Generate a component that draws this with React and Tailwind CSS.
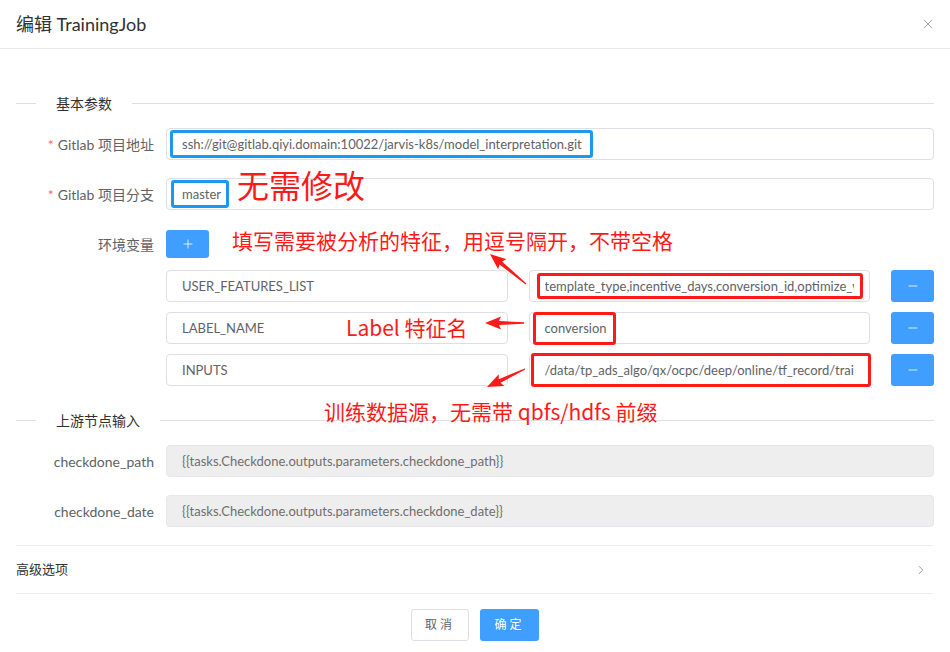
import React from 'react';
import { X, Plus, Minus, ChevronRight } from 'lucide-react';

const RED = '#ff1a1a';

function Arrow({ x1, y1, x2, y2 }) {
  const dx = x2 - x1, dy = y2 - y1, L = Math.hypot(dx, dy);
  const ux = dx / L, uy = dy / L, nx = -uy, ny = ux;
  const bx = x2 - ux * 14, by = y2 - uy * 14;
  const p = (x, y, k) => `${(x + nx * k).toFixed(1)},${(y + ny * k).toFixed(1)}`;
  const pts = [p(x1, y1, 0.7), p(bx, by, 2), p(bx - ux * 2, by - uy * 2, 6.5), `${x2},${y2}`, p(bx - ux * 2, by - uy * 2, -6.5), p(bx, by, -2), p(x1, y1, -0.7)].join(' ');
  return <polygon points={pts} fill={RED} />;
}

const Field = ({ value, box, disabled }) => (
  <div className={`relative flex-1 min-w-0 h-8 flex items-center border rounded-[4px] px-[15px] pt-[1px] text-[13px] ${disabled ? 'bg-[#eeeeee] border-[#e4e7ed] text-[#6e6e6e]' : 'bg-white border-[#dcdfe6] text-[#606266]'}`}>
    <span className="min-w-0 flex-1 overflow-hidden whitespace-nowrap">{value}</span>
    {box}
  </div>
);

const Label = ({ children, req }) => (
  <div className="w-[150px] shrink-0 pr-[12px] text-right text-[14px] text-[#606266]">
    {req && <span className="text-[#f56c6c] mr-[4px]">*</span>}
    {children}
  </div>
);

const Section = ({ title, className = '' }) => (
  <div className={`flex items-center h-5 ${className}`}>
    <div className="w-5 border-t border-[#dcdfe6]" />
    <div className="px-5 text-[14px] text-[#303133]">{title}</div>
    <div className="flex-1 border-t border-[#dcdfe6]" />
  </div>
);

const envs = [
  { k: 'USER_FEATURES_LIST', v: 'template_type,incentive_days,conversion_id,optimize_way', box: 'absolute left-[7px] right-[6px] top-[2px] bottom-[2px]' },
  { k: 'LABEL_NAME', v: 'conversion', box: 'absolute left-[3px] w-[83px] top-[-1px] bottom-[-2px]' },
  { k: 'INPUTS', v: '/data/tp_ads_algo/qx/ocpc/deep/online/tf_record/train', box: 'absolute left-[1px] right-[-2px] top-[-2px] bottom-[-2px]' },
];

export default function App() {
  return (
    <div className="relative w-[950px] h-[652px] bg-white overflow-hidden font-[family-name:'Lato','Noto_Sans_CJK_SC',sans-serif]">
      {/* Header */}
      <div className="h-[49px] pl-4 pr-[14px] flex items-center justify-between border-b border-[#e8e8e8]">
        <span className="text-[18px] text-[#303133]">编辑 TrainingJob</span>
        <X className="w-4 h-4 text-[#909399]" strokeWidth={1.25} />
      </div>

      <div className="px-4">
        <Section title="基本参数" className="mt-[44px]" />

        <div className="flex items-center mt-[15px]">
          <Label req>Gitlab 项目地址</Label>
          <Field value="ssh://git@gitlab.qiyi.domain:10022/jarvis-k8s/model_interpretation.git"
            box={<div className="absolute left-[3px] w-[423px] top-[1px] bottom-[1px] border-[3px] border-[#1c98f0] rounded-[3px]" />} />
        </div>

        <div className="flex items-center mt-[18px]">
          <Label req>Gitlab 项目分支</Label>
          <Field value="master"
            box={<div className="absolute left-[4px] w-[58px] top-[1px] bottom-[1px] border-[3px] border-[#1c98f0] rounded-[3px]" />} />
        </div>

        <div className="flex items-center h-8 mt-[18px]">
          <Label>环境变量</Label>
          <button className="w-[43px] h-7 rounded-[3px] bg-[#409eff] flex items-center justify-center text-white">
            <Plus className="w-[14px] h-[14px]" strokeWidth={1.4} />
          </button>
        </div>

        <div className="ml-[150px] mt-[10px] flex flex-col gap-[10px]">
          {envs.map((e) => (
            <div key={e.k} className="flex items-center gap-[21px]">
              <Field value={e.k} />
              <Field value={e.v}
                box={<div className={`${e.box} border-[3px] border-[#ff1a1a] rounded-[3px]`} />} />
              <button className="w-[43px] h-8 shrink-0 rounded-[3px] bg-[#409eff] flex items-center justify-center text-white">
                <Minus className="w-[14px] h-[14px]" strokeWidth={1.4} />
              </button>
            </div>
          ))}
        </div>

        <Section title="上游节点输入" className="mt-[24px]" />

        <div className="flex items-center mt-[15px]">
          <Label>checkdone_path</Label>
          <Field disabled value="{{tasks.Checkdone.outputs.parameters.checkdone_path}}" />
        </div>
        <div className="flex items-center mt-[18px]">
          <Label>checkdone_date</Label>
          <Field disabled value="{{tasks.Checkdone.outputs.parameters.checkdone_date}}" />
        </div>

        <div className="mt-[18px] h-[49px] border-y border-[#ebeef5] flex items-center justify-between">
          <span className="text-[13px] text-[#303133]">高级选项</span>
          <ChevronRight className="w-[14px] h-[14px] mr-[6px] text-[#707070]" strokeWidth={1.25} />
        </div>

        <div className="mt-[15px] flex justify-center gap-[11px]">
          <button className="w-[58px] h-8 rounded-[3px] border border-[#dcdfe6] bg-white text-[12px] tracking-[3px] text-[#606266]">取消</button>
          <button className="w-[59px] h-8 rounded-[3px] bg-[#409eff] text-[12px] tracking-[3px] text-white">确定</button>
        </div>
      </div>

      {/* Annotations */}
      <div className="absolute left-[237px] top-[168px] text-[32px] leading-none text-[#ff1a1a] font-[family-name:'Noto_Sans_CJK_SC',sans-serif]">无需修改</div>
      <div className="absolute left-[232px] top-[230px] text-[21px] leading-none text-[#ff1a1a] font-[family-name:'Noto_Sans_CJK_SC',sans-serif]">填写需要被分析的特征，用逗号隔开，不带空格</div>
      <div className="absolute left-[346px] top-[317px] text-[21px] leading-none text-[#ff1a1a] font-[family-name:'Noto_Sans_CJK_SC',sans-serif]">Label 特征名</div>
      <div className="absolute left-[324px] top-[401px] text-[21px] leading-none text-[#ff1a1a] font-[family-name:'Noto_Sans_CJK_SC',sans-serif]">训练数据源，无需带 qbfs/hdfs 前缀</div>
      <svg className="absolute inset-0 pointer-events-none" width="950" height="652">
        <Arrow x1={526} y1={284} x2={490} y2={254} />
        <Arrow x1={524} y1={323} x2={485} y2={323} />
        <Arrow x1={525} y1={369} x2={487} y2={387} />
      </svg>
    </div>
  );
}
